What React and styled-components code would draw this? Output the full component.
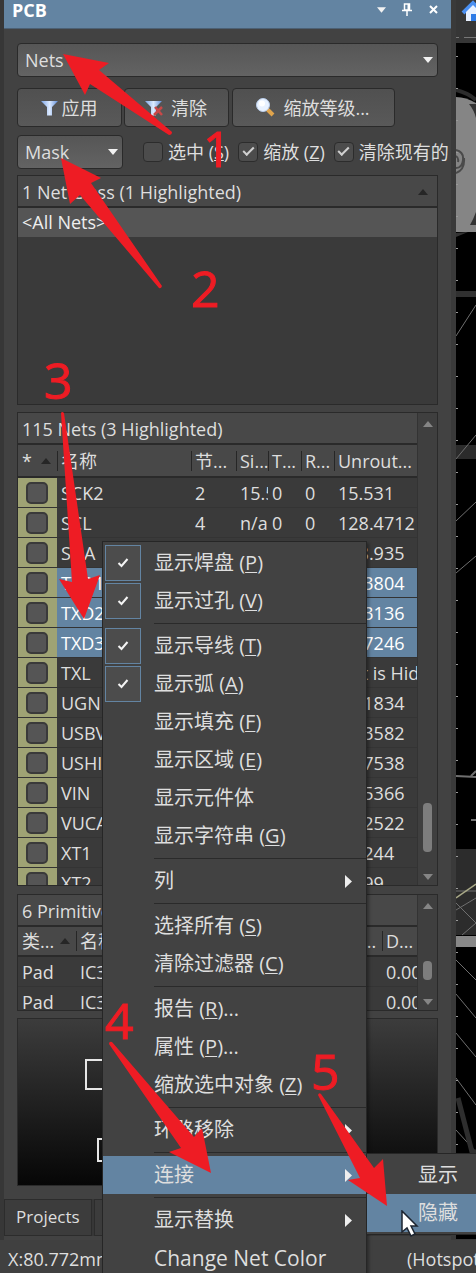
import React from "react";
import styled, { createGlobalStyle, css } from "styled-components";

const Global = createGlobalStyle`
  *, *::before, *::after { box-sizing: border-box; }
  body { margin: 0; background: #424242; }
  body, button, select, input, table {
    font-family: "Open Sans", "Noto Sans CJK SC", sans-serif;
    font-size: 18px;
    line-height: 24px;
    color: #dedede;
  }
`;

const blue = "#6384a2";
const line = "#2a2a2a";

const Page = styled.div`
  position: relative;
  display: flex;
  flex-direction: column;
  min-height: 100vh;
  overflow: hidden;
  white-space: nowrap;
  background: #373737;
`;

const Workspace = styled.div`
  display: flex;
  flex: 1;
  padding-left: 4px;
`;

const Panel = styled.section`
  flex: 1;
  min-width: 0;
  display: flex;
  flex-direction: column;
  background: #424242;
  overflow: hidden;
`;

const TitleBar = styled.header`
  display: flex;
  align-items: center;
  justify-content: space-between;
  height: 29px;
  padding: 0 11px 9px 8px;
  background: ${blue};
  border-bottom: 1px solid #4c6074;
  h1 { margin: 0; font-size: 18px; line-height: 20px; font-weight: 700; color: #fff; }
`;

const TitleTools = styled.div`
  display: flex;
  gap: 12px;
`;

const ToolButton = styled.button`
  display: grid;
  place-items: center;
  width: 14px;
  height: 20px;
  padding: 0;
  border: 0;
  background: none;
`;

const PanelBody = styled.div`
  display: flex;
  flex-direction: column;
  padding: 14px 13px 13px;
`;

const SelectBox = styled.div`
  display: grid;
  flex: none;
  align-items: center;
  width: ${(p) => p.$width || "auto"};
  svg { grid-area: 1 / 1; justify-self: end; margin-right: 5px; pointer-events: none; }
`;

const Select = styled.select`
  grid-area: 1 / 1;
  appearance: none;
  width: 100%;
  height: 34px;
  padding: 0 7px;
  border: 1px solid ${line};
  border-radius: 4px;
  background: linear-gradient(#565656, #636363);
`;

const ButtonRow = styled.div`
  display: grid;
  grid-template-columns: 105px 105px 164px;
  gap: 2px;
  margin: 11px 0 8px;
  button:last-child { margin-left: 1px; }
`;

const PushButton = styled.button`
  display: flex;
  align-items: center;
  justify-content: center;
  gap: ${(p) => p.$gap || "3px"};
  height: 39px;
  padding: 0 2px 0 0;
  border: 1px solid ${line};
  border-radius: 4px;
  background: linear-gradient(#505050, #595959);
`;

const OptionRow = styled.div`
  display: flex;
  align-items: center;
  margin-bottom: 6px;
`;

const CheckLabel = styled.label`
  display: flex;
  flex: none;
  align-items: center;
  gap: 5px;
  margin-left: ${(p) => p.$gap || "9px"};
`;

const CheckBox = styled.input`
  appearance: none;
  flex: none;
  display: grid;
  place-items: center;
  width: 20px;
  height: 20px;
  margin: 0;
  border: 1px solid #2c2c2c;
  border-radius: 4px;
  background: #4c4c4c;
  &:checked::before {
    content: "";
    width: 11px;
    height: 6px;
    margin-bottom: 4px;
    border: solid #d0d0d0;
    border-width: 0 0 2px 2px;
    transform: rotate(-45deg);
  }
`;

const ListBox = styled.section`
  display: flex;
  height: ${(p) => p.$height};
  margin-bottom: ${(p) => p.$gap || "7px"};
  border: 1px solid ${line};
  background: #3a3a3a;
  overflow: hidden;
`;

const ListMain = styled.div`
  flex: 1;
  min-width: 0;
`;

const ListTitle = styled.h2`
  display: flex;
  align-items: center;
  justify-content: space-between;
  height: 32px;
  margin: 0;
  padding: 2px 9px 0 4px;
  border-bottom: 2px solid ${line};
  background: #484848;
  font-size: 18px;
  font-weight: 400;
`;

const ClassRow = styled.div`
  height: 29px;
  padding: 2px 4px;
  background: #555;
  color: #eee;
`;

const ScrollTrack = styled.div`
  display: flex;
  flex-direction: column;
  align-items: center;
  flex: none;
  width: 20px;
  padding: 8px 0 5px;
  border-left: 1px solid #333;
  background: #3f3f3f;
`;

const Thumb = styled.div`
  width: 9px;
  height: ${(p) => p.$height};
  margin: auto 0 ${(p) => p.$after};
  border-radius: 4px;
  background: #7d7d7d;
`;

const Table = styled.table`
  width: 100%;
  table-layout: fixed;
  border-collapse: separate;
  border-spacing: 0;
  th, td { padding: 0; text-align: left; font-weight: 400; overflow: hidden; }
  th { height: ${(p) => p.$head}; background: #484848; border-bottom: 2px solid ${line}; }
  td { height: 30px; padding-left: 4px; border-bottom: 1px solid #343434; line-height: 28px; }
`;

const HeadCell = styled.div`
  display: flex;
  align-items: center;
  height: 20px;
  gap: ${(p) => p.$gap || 0};
  padding-left: 3px;
  border-left: 1px solid ${(p) => (p.$first ? "transparent" : "#262626")};
`;

const NetRow = styled.tr`
  td:first-child { padding-left: 8px; background: #9fa374; border-color: #333; }
  ${(p) => p.$selected && css`
    td { background: ${blue}; border-color: #333; color: #fff; }
  `}
`;

const NetCheck = styled.input`
  appearance: none;
  display: block;
  width: 22px;
  height: 22px;
  margin: 0;
  border: 2px solid #3a3a3a;
  border-radius: 5px;
  background: #555;
`;

const Preview = styled.div`
  height: 168px;
  border: 1px solid ${line};
  background: linear-gradient(#3c3c3c, #060606);
  svg { display: block; }
`;

const Tabs = styled.nav`
  display: flex;
  gap: 2px;
  margin-bottom: 4px;
  background: #373737;
`;

const Tab = styled.button`
  min-width: 86px;
  height: 37px;
  padding: 0 11px 2px;
  border: 1px solid #2c2c2c;
  background: #3c3c3c;
  font-size: 17px;
  text-align: left;
`;

const StatusBar = styled.footer`
  display: flex;
  justify-content: space-between;
  height: 34px;
  padding: 7px 0 0 8px;
  background: #404040;
  overflow: hidden;
  span:last-child { width: 69px; }
`;

const Board = styled.aside`
  flex: none;
  width: 25px;
  padding-left: 5px;
  background: #3a3a3a;
  svg { display: block; }
`;

const Menu = styled.div`
  position: absolute;
  left: 102px;
  top: 541px;
  width: 265px;
  padding: 2px 0;
  border: 1px solid #262626;
  background: #424242;
  box-shadow: 2px 2px 3px rgba(0, 0, 0, 0.35);
`;

const MenuEntry = styled.div`
  position: relative;
`;

const MenuItem = styled.button`
  display: grid;
  grid-template-columns: 49px 1fr auto;
  align-items: center;
  width: 100%;
  height: 38px;
  padding: 0 14px 0 2px;
  border: 0;
  background: ${(p) => (p.$active ? blue : "transparent")};
  font-size: ${(p) => (p.$latin ? "21px" : "20px")};
  text-align: left;
  u { text-underline-offset: 2px; text-decoration-thickness: 1px; }
`;

const Tick = styled.span`
  display: grid;
  place-items: center;
  width: 36px;
  height: 36px;
  border: 1px solid ${blue};
  background: #4c4c4c;
`;

const Divider = styled.hr`
  height: 1px;
  margin: 3px 0 3px 51px;
  border: 0;
  background: ${line};
`;

const SubMenu = styled.div`
  position: absolute;
  left: 100%;
  top: -3px;
  width: 160px;
  padding: 2px 0;
  border: 1px solid #262626;
  background: #424242;
`;

const Notes = styled.svg`
  position: absolute;
  left: 0;
  top: 0;
  pointer-events: none;
  fill: #ee1c24;
  text {
    font-family: "Open Sans", sans-serif;
    font-size: 50px;
    stroke: #ee1c24;
    stroke-width: 1px;
  }
`;

const Pointer = styled.svg`
  position: absolute;
  left: 34px;
  top: 56px;
`;

const Down = ({ w = 10, h = 6, fill = "#f2f2f2" }) => (
  <svg width={w} height={h} viewBox="0 0 10 6"><path d="M0 0h10L5 6z" fill={fill} /></svg>
);
const Up = ({ fill = "#262626" }) => (
  <svg width="10" height="6" viewBox="0 0 10 6"><path d="M0 6h10L5 0z" fill={fill} /></svg>
);
const Right = () => (
  <svg width="8" height="13" viewBox="0 0 8 13"><path d="M1 0v13l7-6.500z" fill="#eee" /></svg>
);

const Funnel = ({ clear }) => (
  <svg width="19" height="18" viewBox="0 0 19 18">
    <defs>
      <linearGradient id="fun" x1="0" x2="1">
        <stop offset="0" stopColor="#7ba4e6" /><stop offset=".5" stopColor="#dceaff" /><stop offset="1" stopColor="#5f8dd8" />
      </linearGradient>
    </defs>
    <path d="M1 2h17l-6 6v8.500H7V8z" fill="url(#fun)" />
    {clear && <path d="M11 8l7 8M18 8l-8 8" stroke="#c94848" strokeWidth="2.500" />}
  </svg>
);

const Lens = () => (
  <svg width="20" height="19" viewBox="0 0 20 19">
    <path d="M12 11l6 6" stroke="#e0a44c" strokeWidth="4" />
    <circle cx="8" cy="7" r="6.500" fill="#e9f2ff" stroke="#b9cdea" />
    <circle cx="7" cy="5.500" r="3" fill="#fff" />
  </svg>
);

const nets = [
  ["SCK2", "2", "15.531", "0", "0", "15.531"],
  ["SCL", "4", "n/a", "0", "0", "128.4712"],
  ["SDA", "4", "n/a", "0", "0", "128.935"],
  ["TXD1", "2", "n/a", "0", "0", "14.3804"],
  ["TXD2", "2", "n/a", "0", "0", "13.3136"],
  ["TXD3", "2", "n/a", "0", "0", "12.7246"],
  ["TXL", "2", "n/a", "0", "0", "Net is Hidden"],
  ["UGND", "3", "n/a", "0", "0", "20.1834"],
  ["USBVCC", "3", "n/a", "0", "0", "10.3582"],
  ["USHIELD", "3", "n/a", "0", "0", "11.7538"],
  ["VIN", "5", "n/a", "0", "0", "60.5366"],
  ["VUCAP", "2", "n/a", "0", "0", "12.2522"],
  ["XT1", "3", "n/a", "0", "0", "12.244"],
  ["XT2", "3", "n/a", "0", "0", "12.99"],
];

const menu = [
  { t: "显示焊盘", k: "P", on: true },
  { t: "显示过孔", k: "V", on: true },
  null,
  { t: "显示导线", k: "T", on: true },
  { t: "显示弧", k: "A", on: true },
  { t: "显示填充", k: "F" },
  { t: "显示区域", k: "E" },
  { t: "显示元件体" },
  { t: "显示字符串", k: "G" },
  null,
  { t: "列", sub: true },
  null,
  { t: "选择所有", k: "S" },
  { t: "清除过滤器", k: "C" },
  null,
  { t: "报告", k: "R", dots: true },
  { t: "属性", k: "P", dots: true },
  { t: "缩放选中对象", k: "Z" },
  null,
  { t: "环路移除", sub: true },
  null,
  { t: "连接", sub: true, active: true },
  null,
  { t: "显示替换", sub: true },
  { t: "Change Net Color", latin: true },
];

const ticks = Array.from({ length: 35 }, (_, i) => 56 + i * 32);

function ContextMenu() {
  return (
    <Menu role="menu">
      {menu.map((m, i) =>
        m === null ? <Divider key={i} /> : (
          <MenuEntry key={i}>
            <MenuItem
              role={m.on ? "menuitemcheckbox" : "menuitem"}
              aria-checked={m.on}
              $active={m.active}
              $latin={m.latin}
            >
              <span>
                {m.on && (
                  <Tick>
                    <svg width="12" height="10" viewBox="0 0 12 10"><path d="M1.500 5l3 3 6-7" fill="none" stroke="#f4f4f4" strokeWidth="2" /></svg>
                  </Tick>
                )}
              </span>
              <span>{m.t}{m.k && <> (<u>{m.k}</u>)</>}{m.dots && "..."}</span>
              {m.sub && <Right />}
            </MenuItem>
            {m.active && (
              <SubMenu role="menu">
                <MenuItem role="menuitem"><span /><span>显示</span></MenuItem>
                <MenuItem role="menuitem" $active><span /><span>隐藏</span></MenuItem>
                <Pointer width="18" height="27" viewBox="0 0 18 27">
                  <path d="M1 1v21l5-4 4 8 4-2-4-8h6z" fill="#fff" stroke="#1c2430" strokeWidth="1.500" />
                </Pointer>
              </SubMenu>
            )}
          </MenuEntry>
        )
      )}
    </Menu>
  );
}

export default function App() {
  return (
    <Page>
      <Global />
      <Workspace>
        <Panel>
          <TitleBar>
            <h1>PCB</h1>
            <TitleTools>
              <ToolButton aria-label="Panel menu"><Down w={9} h={6} /></ToolButton>
              <ToolButton aria-label="Pin">
                <svg width="10" height="13" viewBox="0 0 10 13">
                  <path d="M2.500 1h5v6h-5zM0 7.500h10M5 8v5" fill="none" stroke="#fff" strokeWidth="1.500" />
                  <path d="M5.500 1h2v6h-2z" fill="#fff" />
                </svg>
              </ToolButton>
              <ToolButton aria-label="Close">
                <svg width="9" height="9" viewBox="0 0 9 9"><path d="M1 1l7 7M8 1l-7 7" stroke="#fff" strokeWidth="2" /></svg>
              </ToolButton>
            </TitleTools>
          </TitleBar>
          <PanelBody>
            <SelectBox>
              <Select aria-label="Object kind"><option>Nets</option></Select>
              <Down />
            </SelectBox>
            <ButtonRow>
              <PushButton><Funnel />应用</PushButton>
              <PushButton $gap="8px"><Funnel clear />清除</PushButton>
              <PushButton $gap="8px"><Lens />缩放等级...</PushButton>
            </ButtonRow>
            <OptionRow>
              <SelectBox $width="106px">
                <Select aria-label="Highlight mode"><option>Mask</option></Select>
                <Down />
              </SelectBox>
              <CheckLabel $gap="20px"><CheckBox type="checkbox" /><span>选中 (<u>S</u>)</span></CheckLabel>
              <CheckLabel><CheckBox type="checkbox" defaultChecked /><span>缩放 (<u>Z</u>)</span></CheckLabel>
              <CheckLabel><CheckBox type="checkbox" defaultChecked /><span>清除现有的</span></CheckLabel>
            </OptionRow>

            <ListBox $height="230px">
              <ListMain>
                <ListTitle>1 Net Class (1 Highlighted)<Up /></ListTitle>
                <ClassRow>&lt;All Nets&gt;</ClassRow>
              </ListMain>
            </ListBox>

            <ListBox $height="474px" $gap="8px">
              <ListMain>
                <ListTitle>115 Nets (3 Highlighted)</ListTitle>
                <Table $head="33px">
                  <colgroup>
                    <col width="39" /><col /><col width="45" /><col width="32" />
                    <col width="33" /><col width="33" /><col width="83" />
                  </colgroup>
                  <thead>
                    <tr>
                      <th><HeadCell $first $gap="9px">*<Up /></HeadCell></th>
                      <th><HeadCell>名称</HeadCell></th>
                      <th><HeadCell>节...</HeadCell></th>
                      <th><HeadCell>Si...</HeadCell></th>
                      <th><HeadCell>T...</HeadCell></th>
                      <th><HeadCell>R...</HeadCell></th>
                      <th><HeadCell>Unrout...</HeadCell></th>
                    </tr>
                  </thead>
                  <tbody>
                    {nets.map((n) => (
                      <NetRow key={n[0]} $selected={n[0].startsWith("TXD")}>
                        <td><NetCheck type="checkbox" aria-label={n[0]} /></td>
                        {n.map((v, i) => <td key={i}>{v}</td>)}
                      </NetRow>
                    ))}
                  </tbody>
                </Table>
              </ListMain>
              <ScrollTrack><Up fill="#858585" /><Thumb $height="49px" $after="22px" /><Down fill="#858585" /></ScrollTrack>
            </ListBox>

            <ListBox $height="117px">
              <ListMain>
                <ListTitle>6 Primitives (3 Highlighted)</ListTitle>
                <Table $head="30px">
                  <colgroup>
                    <col width="58" /><col width="150" /><col /><col width="42" /><col width="35" />
                  </colgroup>
                  <thead>
                    <tr>
                      <th><HeadCell $first $gap="6px">类...<Up /></HeadCell></th>
                      <th><HeadCell>名称</HeadCell></th>
                      <th><HeadCell>层</HeadCell></th>
                      <th><HeadCell>长...</HeadCell></th>
                      <th><HeadCell>D...</HeadCell></th>
                    </tr>
                  </thead>
                  <tbody>
                    <tr><td>Pad</td><td>IC3-1</td><td /><td /><td>0.000</td></tr>
                    <tr><td>Pad</td><td>IC3-2</td><td /><td /><td>0.000</td></tr>
                  </tbody>
                </Table>
              </ListMain>
              <ScrollTrack><Up fill="#858585" /><Thumb $height="19px" $after="19px" /><Down fill="#858585" /></ScrollTrack>
            </ListBox>

            <Preview>
              <svg width="200" height="166" viewBox="0 0 200 166" fill="none" stroke="#e6e6e6" strokeWidth="2">
                <path d="M120 41H68v29h52M120 120H80v22h40" />
              </svg>
            </Preview>
          </PanelBody>
          <Tabs>
            <Tab>Projects</Tab>
            <Tab>Navigator</Tab>
          </Tabs>
        </Panel>
        <Board>
          <svg width="20" height="1239" viewBox="456 0 20 1239" fill="none">
            <rect x="456" width="20" height="1239" fill="#000" />
            <rect x="456" width="20" height="43" fill="#363636" />
            <path d="M456 37.500h3M464 37.500h12" stroke="#777" />
            <path d="M463 13l10-10 10 10" stroke="#4a8ff0" strokeWidth="4" />
            <path d="M466 12l7-7 7 7v9h-14z" fill="#e8f1ff" />
            <rect x="471" y="14" width="5" height="7" fill="#2e7be6" />
            <path d="M456 90q12 3 20 10" stroke="#2c2c2c" strokeWidth="4" />
            <path d="M456 97q10 0 20 6v129h-20z" fill="#858585" />
            <path d="M469 104h7v14q-2-8-7-14zM476 212q-3 8-6 13h6z" fill="#333" />
            <path d="M456 150q8 2 7 10t-7 8M456 156q3 2 2 6M464 158q1 12-8 15" stroke="#4a4a4a" strokeWidth="2" />
            <path d="M456 233l12-1-12 5z" fill="#333" />
            <rect x="456" y="291" width="20" height="6" fill="#303030" />
            <rect x="456" y="445" width="20" height="14" fill="#2b2b2b" />
            <rect x="456" y="849" width="20" height="86" fill="#2c2c2c" />
            <g stroke="#6f6f6f">
              <path d="M456 336l20-31M456 459l20-24M456 521l20-19M456 573l20-17" />
              <path d="M456 776l20 1M471 776l5-5M471 820h5" strokeWidth="2" />
              <path d="M456 891h20M462 935l14-12M456 903l20 20M456 910l20-12" />
              <path d="M456 960l20 20M456 994l20 24M456 1033l20 24M456 1078l20 27M456 1130l20 22" />
            </g>
            <path d="M456 898l20-14" stroke="#a9a987" strokeWidth="1.500" />
            <rect x="456" y="936" width="20" height="11" fill="#888" />
            <path d="M458 1098l14 54h4" stroke="#2e2e2e" strokeWidth="5" />
            {ticks.map((y) => <rect key={y} x="456" y={y} width="2" height="1" fill="#999" />)}
          </svg>
        </Board>
      </Workspace>
      <StatusBar><span>X:80.772mm Y:55.118mm</span><span>(Hotspot Snap)</span></StatusBar>
      <ContextMenu />
      <Notes width="476" height="1273" viewBox="0 0 476 1273" aria-hidden="true">
        <path d="M63 54l46 9-10 7 73 62q0 3-3 3L90 84l-5 11z" />
        <path d="M61 158l40 20-10 5 71 103q-1 3-3 2L80 195l-10 9z" />
        <path d="M84 619l-25-40 13 3-11-169q1-2 3 0l24 166 12-4z" />
        <path d="M211 1173l-42-21 12-4-72-104q0-3 3-2l82 95 8-9z" />
        <path d="M387 1206l-39-26 12-2-42-83q1-3 3-1l53 74 9-9z" />
        <text x="203" y="167">1</text>
        <text x="191" y="307">2</text>
        <text x="44" y="399">3</text>
        <text x="105" y="1039">4</text>
        <text x="311" y="1090">5</text>
      </Notes>
    </Page>
  );
}
